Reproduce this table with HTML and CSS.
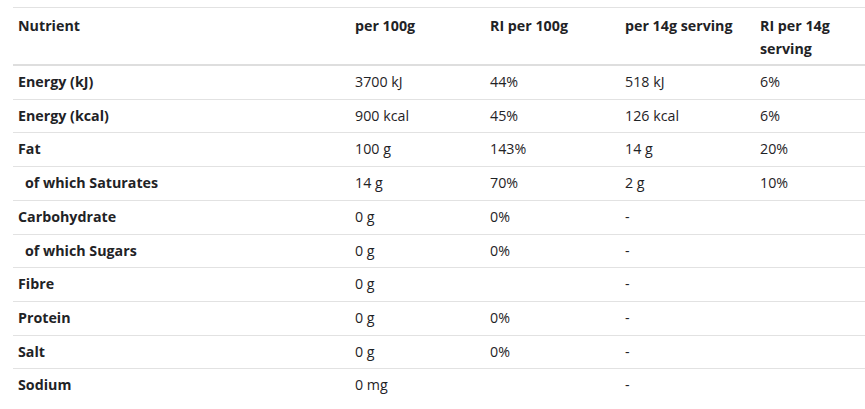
FILE: index.html
```html
<!DOCTYPE html>
<html lang="en">
<head>
<meta charset="utf-8">
<title>Nutrition</title>
<link rel="stylesheet" href="styles.css">
</head>
<body>
<div class="wrap">
<table class="nutri">
<colgroup>
<col class="c1"><col class="c2"><col class="c3"><col class="c4"><col class="c5">
</colgroup>
<thead>
<tr><th>Nutrient</th><th>per 100g</th><th>RI per 100g</th><th>per 14g serving</th><th>RI per 14g serving</th></tr>
</thead>
<tbody>
<tr><th>Energy (kJ)</th><td>3700 kJ</td><td>44%</td><td>518 kJ</td><td>6%</td></tr>
<tr><th>Energy (kcal)</th><td>900 kcal</td><td>45%</td><td>126 kcal</td><td>6%</td></tr>
<tr><th>Fat</th><td>100 g</td><td>143%</td><td>14 g</td><td>20%</td></tr>
<tr><th class="sub">of which Saturates</th><td>14 g</td><td>70%</td><td>2 g</td><td>10%</td></tr>
<tr><th>Carbohydrate</th><td>0 g</td><td>0%</td><td>-</td><td></td></tr>
<tr><th class="sub">of which Sugars</th><td>0 g</td><td>0%</td><td>-</td><td></td></tr>
<tr><th>Fibre</th><td>0 g</td><td></td><td>-</td><td></td></tr>
<tr><th>Protein</th><td>0 g</td><td>0%</td><td>-</td><td></td></tr>
<tr><th>Salt</th><td>0 g</td><td>0%</td><td>-</td><td></td></tr>
<tr><th>Sodium</th><td>0 mg</td><td></td><td>-</td><td></td></tr>
</tbody>
</table>
</div>
</body>
</html>
```
FILE: styles.css
```css
html, body {
  margin: 0;
  padding: 0;
  background: #fff;
}
.wrap {
  padding: 7px 0 0 13px;
}
.nutri {
  width: 852px;
  table-layout: fixed;
  border-collapse: collapse;
  font-family: "Open Sans", "Liberation Sans", sans-serif;
  font-size: 14.25px;
  color: #1f2326;
  border-top: 1px solid #e2e2e2;
}
.c1 { width: 337px; }
.c2 { width: 135px; }
.c3 { width: 135px; }
.c4 { width: 135px; }
.c5 { width: 110px; }
.nutri th, .nutri td {
  text-align: left;
  vertical-align: top;
  padding: 6px 5px;
  line-height: 20.7px;
}
.nutri th { font-weight: 700; }
.nutri td { font-weight: 400; }
.nutri thead th {
  line-height: 23px;
  padding: 5.5px 5px 4.5px;
  border-bottom: 2px solid #dedede;
}
.nutri tbody tr { border-top: 1px solid #e2e2e2; }
.nutri tbody tr:first-child { border-top: 0; }
.nutri th.sub { padding-left: 12px; }
```
